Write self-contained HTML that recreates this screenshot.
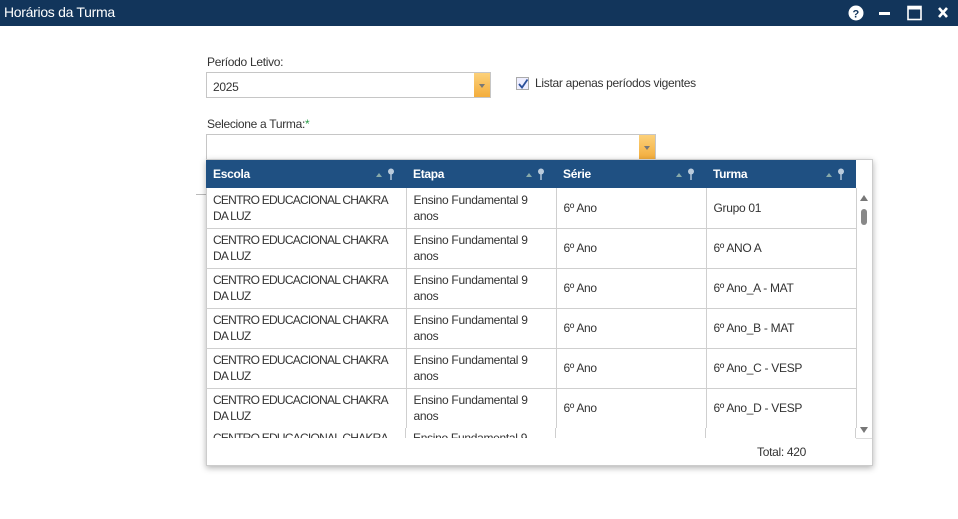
<!DOCTYPE html>
<html><head><meta charset="utf-8"><style>
*{margin:0;padding:0;box-sizing:border-box}
body{width:958px;height:519px;background:#fff;font-family:"Liberation Sans",sans-serif;font-size:12px;color:#333;position:relative;overflow:hidden;letter-spacing:-0.3px}
.title{position:absolute;left:0;top:0;width:958px;height:26px;background:#12355b;color:#fff;font-size:14px;line-height:25px;padding-left:4px}
.abs{position:absolute}
.lbl{font-size:12px;color:#333}
.inp{position:absolute;border:1px solid #c6c6c6;background:#fff}
.dd{position:absolute;top:0;right:0;width:16px;height:100%;background:linear-gradient(#fcd17a,#f3ad3c)}
.dd:after{content:"";position:absolute;left:5px;top:50%;margin-top:-1px;border-left:3px solid transparent;border-right:3px solid transparent;border-top:4px solid #777}
.pop{position:absolute;left:206px;top:159px;width:667px;height:307px;background:#fff;border:1px solid #ccc;box-shadow:0 2px 6px rgba(0,0,0,.3)}
table{border-collapse:collapse;position:absolute;left:-1px;top:0;table-layout:fixed}
th{background:#1f5082;color:#fff;font-weight:bold;text-align:left;height:28px;padding-left:7px;position:relative}
td{border:1px solid #cfcfcf;height:40px;padding:0 7px;vertical-align:middle;line-height:16px;border-top:none}
td:first-child{border-left:none;letter-spacing:-0.75px;padding-right:2px}
.ic{position:absolute;right:8px;top:8px;width:30px;height:12px}
</style></head><body>
<div class="title">Horários da Turma</div>
<svg class="abs" style="left:848px;top:5px" width="100" height="17">
<circle cx="8" cy="8" r="7.5" fill="#fff"/><text x="4.5" y="12.5" font-family="Liberation Sans" font-weight="bold" font-size="11" fill="#12355b">?</text>
<rect x="31" y="7" width="11" height="3" fill="#fff"/>
<rect x="60" y="1.5" width="13" height="13" fill="none" stroke="#fff" stroke-width="1.6"/><rect x="60" y="1.5" width="13" height="3" fill="#fff"/>
<path d="M91 3L99 12M99 3L91 12" stroke="#fff" stroke-width="2.6"/>
</svg>
<div class="abs lbl" style="left:207px;top:55px">Período Letivo:</div>
<div class="inp" style="left:206px;top:72px;width:285px;height:26px"><span class="abs" style="left:6px;top:7px">2025</span><div class="dd"></div></div>
<div class="abs" style="left:516px;top:77px;width:13px;height:13px;border:1px solid #aaa;background:#eef"></div>
<svg class="abs" style="left:517px;top:78px" width="12" height="12"><path d="M2 6L5 9.5L10.5 1.5" stroke="#2a4f9a" stroke-width="1.8" fill="none"/></svg>
<div class="abs lbl" style="left:535px;top:76px">Listar apenas períodos vigentes</div>
<div class="abs lbl" style="left:207px;top:117px">Selecione a Turma:<span style="color:#2a9d4a">*</span></div>
<div class="inp" style="left:206px;top:134px;width:450px;height:26px"><div class="dd"></div></div>
<div class="abs" style="left:196px;top:194px;width:10px;height:1px;background:#bbb"></div>
<div class="pop">
<table>
<colgroup><col style="width:200px"><col style="width:150px"><col style="width:150px"><col style="width:150px"></colgroup>
<tr><th>Escola<svg class="ic" viewBox="0 0 30 12"><path d="M8 9L11 5L14 9Z" fill="#8aa"/><circle cx="23" cy="3.5" r="3" fill="#bcd"/><rect x="22.3" y="5" width="1.4" height="7" fill="#bcd"/></svg></th>
<th>Etapa<svg class="ic" viewBox="0 0 30 12"><path d="M8 9L11 5L14 9Z" fill="#8aa"/><circle cx="23" cy="3.5" r="3" fill="#bcd"/><rect x="22.3" y="5" width="1.4" height="7" fill="#bcd"/></svg></th>
<th>Série<svg class="ic" viewBox="0 0 30 12"><path d="M8 9L11 5L14 9Z" fill="#8aa"/><circle cx="23" cy="3.5" r="3" fill="#bcd"/><rect x="22.3" y="5" width="1.4" height="7" fill="#bcd"/></svg></th>
<th>Turma<svg class="ic" viewBox="0 0 30 12"><path d="M8 9L11 5L14 9Z" fill="#8aa"/><circle cx="23" cy="3.5" r="3" fill="#bcd"/><rect x="22.3" y="5" width="1.4" height="7" fill="#bcd"/></svg></th></tr>
<tr><td>CENTRO EDUCACIONAL CHAKRA DA LUZ</td><td>Ensino Fundamental 9 anos</td><td>6º Ano</td><td>Grupo 01</td></tr>
<tr><td>CENTRO EDUCACIONAL CHAKRA DA LUZ</td><td>Ensino Fundamental 9 anos</td><td>6º Ano</td><td>6º ANO A</td></tr>
<tr><td>CENTRO EDUCACIONAL CHAKRA DA LUZ</td><td>Ensino Fundamental 9 anos</td><td>6º Ano</td><td>6º Ano_A - MAT</td></tr>
<tr><td>CENTRO EDUCACIONAL CHAKRA DA LUZ</td><td>Ensino Fundamental 9 anos</td><td>6º Ano</td><td>6º Ano_B - MAT</td></tr>
<tr><td>CENTRO EDUCACIONAL CHAKRA DA LUZ</td><td>Ensino Fundamental 9 anos</td><td>6º Ano</td><td>6º Ano_C - VESP</td></tr>
<tr><td>CENTRO EDUCACIONAL CHAKRA DA LUZ</td><td>Ensino Fundamental 9 anos</td><td>6º Ano</td><td>6º Ano_D - VESP</td></tr>
</table>
<div class="abs" style="left:0;top:268px;width:650px;height:10px;overflow:hidden;background:#fff">
<div class="abs" style="left:6px;top:3px;letter-spacing:-0.75px">CENTRO EDUCACIONAL CHAKRA</div>
<div class="abs" style="left:206px;top:3px">Ensino Fundamental 9</div>
<div class="abs" style="left:198px;top:0;width:1px;height:10px;background:#cfcfcf"></div>
<div class="abs" style="left:348px;top:0;width:1px;height:10px;background:#cfcfcf"></div>
<div class="abs" style="left:498px;top:0;width:1px;height:10px;background:#cfcfcf"></div>
<div class="abs" style="left:648px;top:0;width:1px;height:10px;background:#cfcfcf"></div>
</div>
<div class="abs" style="left:649px;top:278px;width:16px;height:1px;background:#ddd"></div>
<svg class="abs" style="left:649px;top:29px" width="16" height="248"><path d="M4 12L8 6L12 12Z" fill="#777"/><rect x="5" y="20" width="6" height="16" rx="3" fill="#888"/><path d="M4 238L8 244L12 238Z" fill="#777"/></svg>
<div class="abs" style="left:550px;top:285px">Total: 420</div>
</div>
</body></html>
